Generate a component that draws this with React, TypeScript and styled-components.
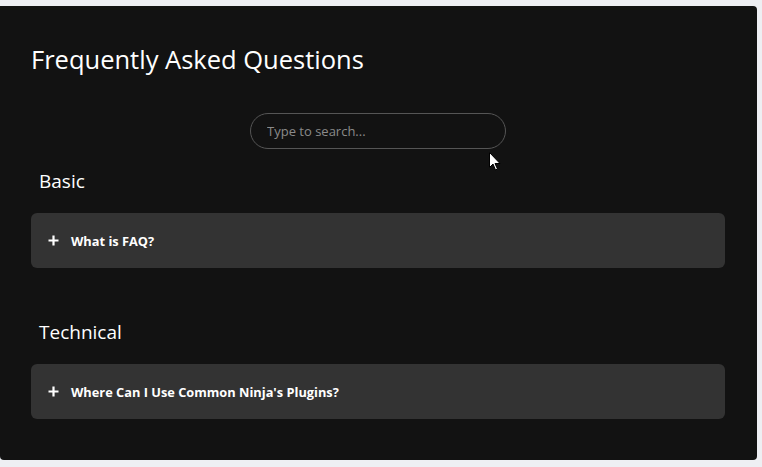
import React, { useState } from 'react'
import styled, { createGlobalStyle } from 'styled-components'

const GlobalStyle = createGlobalStyle`
  html, body {
    margin: 0;
    padding: 0;
    background: #eeeff3;
    font-family: 'Open Sans', 'Noto Sans', sans-serif;
  }
`

const Page = styled.div`
  padding-top: 6px;
  width: 762px;
  height: 467px;
  box-sizing: border-box;
`

const Panel = styled.div`
  position: relative;
  width: 757px;
  height: 454px;
  box-sizing: border-box;
  background: #121212;
  border-radius: 0 4px 4px 4px;
  padding: 39px 32px 0 31px;
  color: #fff;
`

const Title = styled.h1`
  margin: 0;
  font-size: 25.5px;
  font-weight: 400;
  line-height: 28px;
`

const SearchRow = styled.div`
  display: flex;
  justify-content: center;
  margin-top: 40px;
`

const SearchInput = styled.input`
  width: 256px;
  height: 36px;
  box-sizing: border-box;
  border: 1px solid #555;
  border-radius: 18px;
  background: transparent;
  padding: 0 16px;
  font-family: inherit;
  font-size: 13px;
  color: #ddd;
  outline: none;

  &::placeholder {
    color: #8a8a8a;
  }
`

const Section = styled.section<{ first?: boolean }>`
  margin-top: ${({ first }) => (first ? '20px' : '52px')};
`

const SectionTitle = styled.h2`
  margin: 0 0 20px 8px;
  font-size: 19px;
  font-weight: 400;
  line-height: 24px;
`

const Item = styled.button`
  display: flex;
  align-items: center;
  gap: 12px;
  width: 100%;
  height: 55px;
  padding: 0 17px;
  box-sizing: border-box;
  border: none;
  border-radius: 6px;
  background: #333333;
  color: #fff;
  font-family: inherit;
  font-size: 12.8px;
  font-weight: 700;
  text-align: left;
  cursor: pointer;
`

const Plus = styled.svg`
  flex: none;
`

const Pointer = styled.svg`
  position: absolute;
  left: 489px;
  top: 146px;
`

const faqs = [
  { title: 'Basic', items: ['What is FAQ?'] },
  { title: 'Technical', items: ["Where Can I Use Common Ninja's Plugins?"] }
]

export default function App() {
  const [query, setQuery] = useState('')
  return (
    <Page>
      <GlobalStyle />
      <Panel>
        <Title>Frequently Asked Questions</Title>
        <SearchRow>
          <SearchInput placeholder="Type to search..." value={query} onChange={e => setQuery(e.target.value)} />
        </SearchRow>
        {faqs.map((group, i) => (
          <Section key={group.title} first={i === 0}>
            <SectionTitle>{group.title}</SectionTitle>
            {group.items.map(q => (
              <Item key={q}>
                <Plus width="11" height="11" viewBox="0 0 11 11">
                  <path d="M5.5 0.5v10M0.5 5.5h10" stroke="#fff" strokeWidth="2.2" />
                </Plus>
                {q}
              </Item>
            ))}
          </Section>
        ))}
        <Pointer width="12" height="19" viewBox="0 0 12 19">
          <path d="M0.5 0.5v15l3.5-3.5 2.5 6 2-1-2.5-5.5h5z" fill="#fff" stroke="#000" strokeWidth="1" />
        </Pointer>
      </Panel>
    </Page>
  )
}
